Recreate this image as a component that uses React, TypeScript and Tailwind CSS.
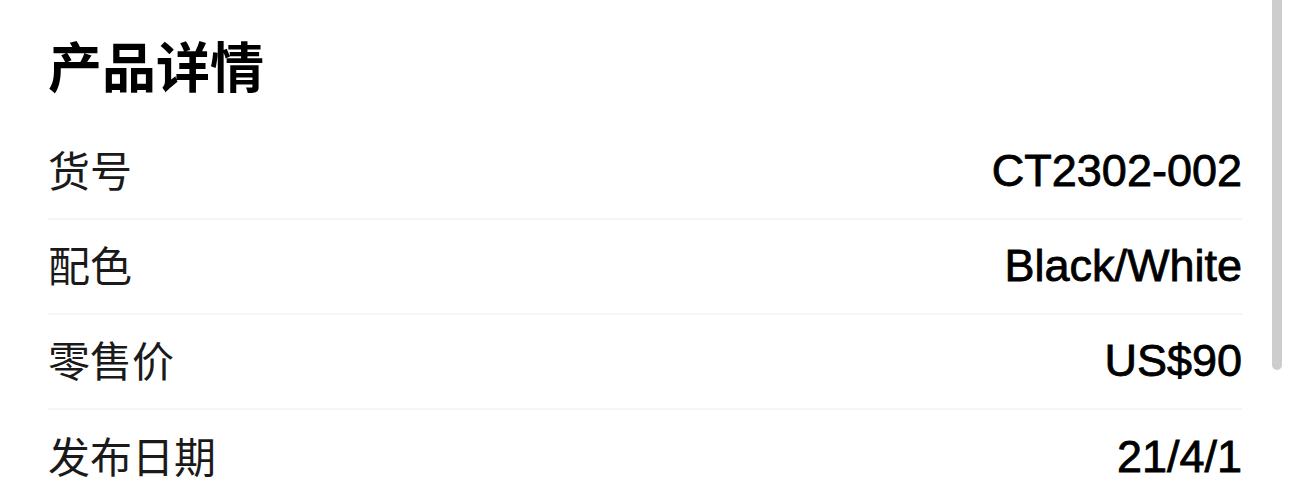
import React from "react";

const rows = [
  { label: "货号", value: "CT2302-002" },
  { label: "配色", value: "Black/White" },
  { label: "零售价", value: "US$90" },
  { label: "发布日期", value: "21/4/1" },
];

export default function App() {
  return (
    <div className="relative w-[1290px] h-[498px] overflow-hidden bg-white">
      <div className="px-12 pt-[28px]">
        <h1 className="h-[74px] leading-[74px] text-[54px] font-bold text-black font-['Noto_Sans_CJK_SC','Noto_Sans',sans-serif]">
          产品详情
        </h1>
        <div className="mt-[23px]">
          {rows.map((r, i) => (
            <div
              key={r.label}
              className={
                "flex h-[95px] items-center justify-between " +
                (i < rows.length - 1 ? "border-b-2 border-[#f5f5f5]" : "")
              }
            >
              <span className="mb-[6px] text-[42px] text-[#1a1a1a] font-['Noto_Sans_CJK_SC','Noto_Sans',sans-serif]">
                {r.label}
              </span>
              <span className="mb-[2px] text-[45px] text-black font-['Liberation_Sans','Arial',sans-serif] [-webkit-text-stroke:0.8px_black]">
                {r.value}
              </span>
            </div>
          ))}
        </div>
      </div>
      <div className="absolute left-[1272px] top-[-10px] h-[380px] w-[10px] rounded-full bg-[#cdcdcd]" />
    </div>
  );
}
